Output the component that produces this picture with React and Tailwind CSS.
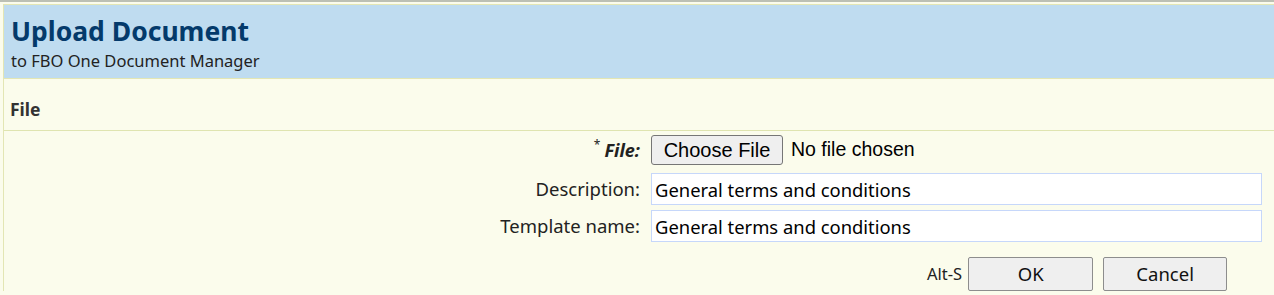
const UploadDocument = () => {
  return (
    <div className="h-[295px] w-[1274px] overflow-hidden bg-[#fbfcec] font-['Noto_Sans',sans-serif]">
      <div className="h-[2px] bg-[#bcc0b4]" />
      <div className="h-[2px] bg-[#fbfcec]" />
      <div className="ml-[3px] border-l border-t border-[#e3e6b4]">
        {/* Header */}
        <div className="h-[74px] border-b border-[#e3e6b4] bg-[#bfdcf0] px-[7px] pt-[10px]">
          <h1 className="text-[26.5px] font-bold leading-[32px] text-[#043a6b]">Upload Document</h1>
          <p className="mt-[4px] text-[16.5px] leading-[20px] text-[#222]">to FBO One Document Manager</p>
        </div>

        {/* Section title */}
        <div className="flex h-[52px] items-end border-b border-[#dfe4b0] px-[6px] pb-[10px]">
          <span className="text-[17.5px] font-bold leading-[22px] text-[#333]">File</span>
        </div>

        {/* Form */}
        <div className="grid grid-cols-[636px_1fr] items-center gap-x-[11px] pr-[12px] pt-[4px]">
          <label className="flex items-center justify-end text-[18px] text-[#222]">
            <span className="-mt-[10px] text-[12px]">*</span>
            <span className="ml-[4px] font-bold italic">File:</span>
          </label>
          <div className="flex h-[30px] items-center">
            <button className="h-[30px] w-[132px] rounded-[3px] border border-[#767676] bg-[#efefef] font-['Liberation_Sans',sans-serif] text-[20px] leading-none text-black">
              Choose File
            </button>
            <span className="ml-[8px] font-['Liberation_Sans',sans-serif] text-[19.5px] text-black">No file chosen</span>
          </div>

          <label className="mt-[8px] text-right text-[18.5px] text-[#222]">Description:</label>
          <input
            readOnly
            value="General terms and conditions"
            className="mt-[8px] h-[32px] border border-[#c6d7fa] bg-white px-[3px] text-[18.4px] text-black outline-none"
          />

          <label className="mt-[5px] text-right text-[18.5px] text-[#222]">Template name:</label>
          <input
            readOnly
            value="General terms and conditions"
            className="mt-[5px] h-[32px] border border-[#c6d7fa] bg-white px-[3px] text-[18.4px] text-black outline-none"
          />
        </div>

        {/* Buttons */}
        <div className="mt-[15px] flex items-center pl-[923px]">
          <span className="text-[16.5px] text-[#222]">Alt-S</span>
          <button className="ml-[6px] h-[34px] w-[125px] rounded-[2px] border border-[#8d8d8d] bg-[#efefef] text-[18.5px] text-[#111]">
            OK
          </button>
          <button className="ml-[10px] h-[34px] w-[124px] rounded-[2px] border border-[#8d8d8d] bg-[#efefef] text-[18.5px] text-[#111]">
            Cancel
          </button>
        </div>
      </div>
    </div>
  );
};

export default UploadDocument;
